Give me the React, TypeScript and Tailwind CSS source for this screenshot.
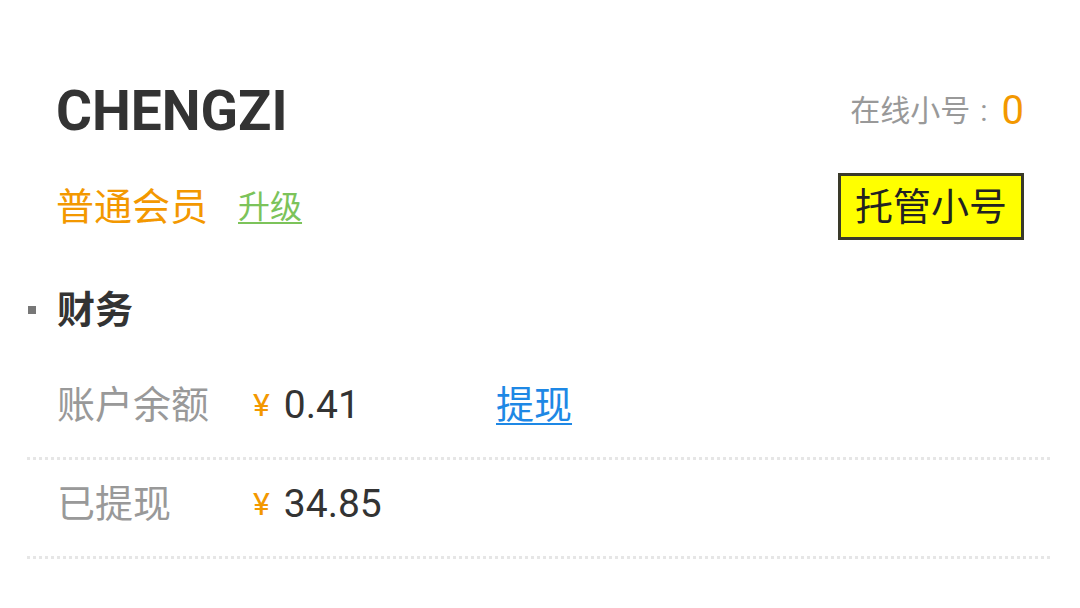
import React from "react";

const font = "font-['Roboto','Noto_Sans_CJK_SC',sans-serif]";

function Dots() {
  return (
    <div className="h-[3px] w-full bg-[repeating-linear-gradient(to_right,#e6e6e6_0px,#e6e6e6_3px,transparent_3px,transparent_6px)]" />
  );
}

function Row({ label, amount, action }: { label: string; amount: string; action?: string }) {
  return (
    <>
      <div className="flex h-[96px] items-center pb-[8px] pl-[30px]">
        <div className="w-[196px] text-[38px] leading-none text-[#999]">{label}</div>
        <div className="flex w-[243px] items-center">
          <span className="text-[32px] leading-none text-[#f39800]">¥</span>
          <span className="ml-[14px] text-[39px] leading-none text-[#333]">{amount}</span>
        </div>
        {action && (
          <a className="text-[38px] leading-none text-[#1e88e5] underline underline-offset-[5px] decoration-2">
            {action}
          </a>
        )}
      </div>
      <Dots />
    </>
  );
}

export default function App() {
  return (
    <div className={`h-[608px] w-[1080px] overflow-hidden bg-white ${font}`}>
      <div className="px-[56px] pt-[84px]">
        <div className="flex h-[54px] items-center justify-between">
          <div className="text-[55px] font-bold leading-none text-[#333]">CHENGZI</div>
          <div className="flex items-center">
            <span className="text-[30px] leading-none text-[#999]">在线小号</span>
            <span className="ml-[10px] text-[30px] leading-none text-[#999]">:</span>
            <span className="ml-[14px] text-[40px] leading-none text-[#f39800]">0</span>
          </div>
        </div>
        <div className="mt-[35px] flex h-[67px] items-center justify-between">
          <div className="flex items-center">
            <span className="text-[38px] leading-none text-[#f39800]">普通会员</span>
            <a className="ml-[30px] text-[32px] leading-none text-[#7cc35a] underline underline-offset-[4px] decoration-2">
              升级
            </a>
          </div>
          <button className="flex h-[67px] w-[186px] items-center justify-center border-[3px] border-[#3a3a2a] bg-[#ffff00] text-[38px] leading-none text-[#222]">
            托管小号
          </button>
        </div>
      </div>
      <div className="mt-[50px] flex h-[40px] items-center pl-[28px]">
        <div className="h-[8px] w-[8px] bg-[#777]" />
        <div className="ml-[21px] text-[38px] font-bold leading-none text-[#333]">财务</div>
      </div>
      <div className="mt-[31px] px-[27px]">
        <Row label="账户余额" amount="0.41" action="提现" />
        <Row label="已提现" amount="34.85" />
      </div>
    </div>
  );
}
